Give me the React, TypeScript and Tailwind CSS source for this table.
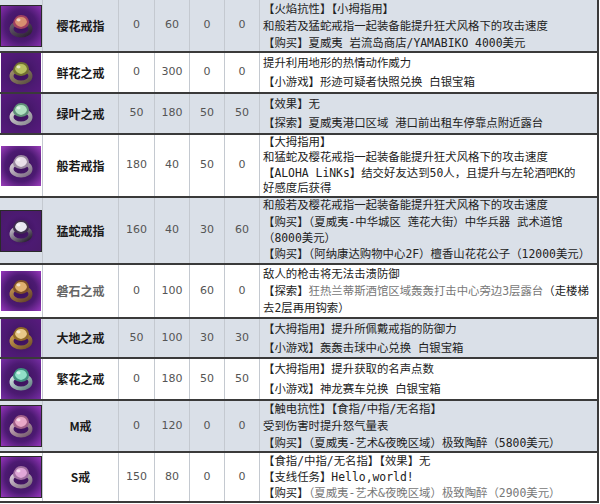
import React from "react";

type Seg = { t: string; g?: boolean };
type Row = {
  name: string;
  nameGray?: boolean;
  v: number[];
  gray: boolean;
  h: string;
  lh: string;
  lines: Seg[][];
  ring: { band: string; band2: string; gem: string; gem2: string; glow: string };
  border?: boolean;
};

const L = (s: string): Seg[] => [{ t: s }];

const rows: Row[] = [
  {
    name: "樱花戒指",
    v: [0, 60, 0, 0],
    gray: true,
    h: "h-[53px]",
    lh: "leading-[16px]",
    border: true,
    lines: [
      L("【火焰抗性】【小拇指用】"),
      L("和般若及猛蛇戒指一起装备能提升狂犬风格下的攻击速度"),
      L("【购买】夏威夷 岩流岛商店/YAMABIKO 4000美元"),
    ],
    ring: { band: "#2a2030", band2: "#6a6070", gem: "#d89070", gem2: "#a04060", glow: "#8a30b0" },
  },
  {
    name: "鲜花之戒",
    v: [0, 300, 0, 0],
    gray: false,
    h: "h-[41px]",
    lh: "leading-[16px]",
    lines: [L("提升利用地形的热情动作威力"), L("【小游戏】形迹可疑者快照兑换 白银宝箱")],
    ring: { band: "#5a5040", band2: "#a09070", gem: "#b8c060", gem2: "#707030", glow: "#5a1a80" },
  },
  {
    name: "绿叶之戒",
    v: [50, 180, 50, 50],
    gray: true,
    h: "h-[41px]",
    lh: "leading-[16px]",
    lines: [L("【效果】无"), L("【探索】夏威夷港口区域 港口前出租车停靠点附近露台")],
    ring: { band: "#8a8a90", band2: "#d8d8d8", gem: "#b0e0c0", gem2: "#609078", glow: "#5a1a80" },
  },
  {
    name: "般若戒指",
    v: [180, 40, 50, 0],
    gray: false,
    h: "h-[63px]",
    lh: "leading-[15px]",
    lines: [
      L("【大拇指用】"),
      L("和猛蛇及樱花戒指一起装备能提升狂犬风格下的攻击速度"),
      L("【ALOHA LiNKs】结交好友达到50人，且提升与左轮酒吧K的"),
      L("好感度后获得"),
    ],
    ring: { band: "#7a6a80", band2: "#d8d0d8", gem: "#e8e0e8", gem2: "#9a8aa0", glow: "#a040c0" },
  },
  {
    name: "猛蛇戒指",
    v: [160, 40, 30, 60],
    gray: true,
    h: "h-[67px]",
    lh: "leading-[15.5px]",
    border: true,
    lines: [
      L("和般若及樱花戒指一起装备能提升狂犬风格下的攻击速度"),
      L("【购买】（夏威夷-中华城区 莲花大街）中华兵器 武术道馆"),
      L("（8000美元）"),
      L("【购买】（阿纳康达购物中心2F）檀香山花花公子（12000美元）"),
    ],
    ring: { band: "#201828", band2: "#c8c0d0", gem: "#e8e8f0", gem2: "#403050", glow: "#4a1a6a" },
  },
  {
    name: "磐石之戒",
    nameGray: true,
    v: [0, 100, 60, 0],
    gray: false,
    h: "h-[54px]",
    lh: "leading-[16px]",
    lines: [
      L("敌人的枪击将无法击溃防御"),
      [{ t: "【探索】" }, { t: "狂热兰蒂斯酒馆区域轰轰打击中心旁边3层露台", g: true }, { t: "（走楼梯" }],
      L("去2层再用钩索）"),
    ],
    ring: { band: "#604028", band2: "#c09050", gem: "#e0b070", gem2: "#805028", glow: "#9a38c0" },
  },
  {
    name: "大地之戒",
    v: [50, 100, 30, 30],
    gray: true,
    h: "h-[40px]",
    lh: "leading-[16px]",
    lines: [L("【大拇指用】提升所佩戴戒指的防御力"), L("【小游戏】轰轰击球中心兑换 白银宝箱")],
    ring: { band: "#705028", band2: "#d0a050", gem: "#e8c888", gem2: "#906828", glow: "#5a1a80" },
  },
  {
    name: "繁花之戒",
    v: [0, 180, 50, 50],
    gray: false,
    h: "h-[42px]",
    lh: "leading-[16px]",
    lines: [L("【大拇指用】提升获取的名声点数"), L("【小游戏】神龙赛车兑换 白银宝箱")],
    ring: { band: "#608080", band2: "#d8e8e8", gem: "#90e0c8", gem2: "#409080", glow: "#7a30a8" },
  },
  {
    name: "M戒",
    v: [0, 120, 0, 0],
    gray: true,
    h: "h-[52px]",
    lh: "leading-[16px]",
    border: true,
    lines: [
      L("【触电抗性】【食指/中指/无名指】"),
      L("受到伤害时提升怒气量表"),
      L("【购买】（夏威夷-艺术&夜晚区域）极致陶醉（5800美元）"),
    ],
    ring: { band: "#705868", band2: "#d8b8c8", gem: "#e8a8c8", gem2: "#a06088", glow: "#9a38c0" },
  },
  {
    name: "S戒",
    v: [150, 80, 0, 0],
    gray: false,
    h: "h-[50px]",
    lh: "leading-[16px]",
    border: true,
    lines: [
      L("【食指/中指/无名指】【效果】无"),
      L("【支线任务】Hello,world!"),
      [{ t: "【购买】" }, { t: "（夏威夷-艺术&夜晚区域）极致陶醉（2900美元）", g: true }],
    ],
    ring: { band: "#786878", band2: "#e0d0e0", gem: "#e0a8d8", gem2: "#a070a0", glow: "#9a38c0" },
  },
];

function RingIcon({ r, id, border }: { r: Row["ring"]; id: number; border?: boolean }) {
  const g = `bg${id}`;
  const b = `bd${id}`;
  const f = `fl${id}`;
  return (
    <svg width="40" height="40" viewBox="0 0 40 40" className={border ? "block outline outline-1 outline-[#2a2a2a]" : "block"}>
      <defs>
        <radialGradient id={g} cx="50%" cy="50%" r="72%">
          <stop offset="0%" stopColor="#3a1058" />
          <stop offset="55%" stopColor="#4c1a72" />
          <stop offset="100%" stopColor={r.glow} />
        </radialGradient>
        <linearGradient id={b} x1="0" y1="0" x2="1" y2="1">
          <stop offset="0%" stopColor={r.band2} />
          <stop offset="100%" stopColor={r.band} />
        </linearGradient>
        <filter id={f}>
          <feGaussianBlur stdDeviation="0.6" />
        </filter>
      </defs>
      <rect x="0" y="0" width="40" height="40" fill={`url(#${g})`} />
      <g filter={`url(#${f})`}>
        <ellipse cx="20" cy="23" rx="9.5" ry="6.5" fill="none" stroke={`url(#${b})`} strokeWidth="4" />
        <path d="M12 17 Q14 9 20 9 Q27 9 28 16 Q28 22 20 23 Q12 22 12 17 Z" fill={r.gem2} />
        <path d="M14 16 Q15 11 20 11 Q25 11 26 16 Q25 20 20 21 Q15 20 14 16 Z" fill={r.gem} />
        <ellipse cx="17.5" cy="14" rx="2" ry="1.4" fill="#ffffff" fillOpacity="0.6" />
      </g>
    </svg>
  );
}

export default function App() {
  return (
    <div className="w-[600px] h-[504px] overflow-hidden bg-white">
      <div className="w-[599px] border-r-2 border-[#3a3a3a]">
        {rows.map((row, i) => (
          <div
            key={i}
            className={`grid grid-cols-[43px_76px_36px_35px_35px_35px_1fr] border-b-2 border-[#3a3a3a] ${row.h} ${
              row.gray ? "bg-[#dae0e8]" : "bg-white"
            }`}
          >
            <div className="flex items-center justify-center border-r border-[#c4c9d0] overflow-hidden">
              <RingIcon r={row.ring} id={i} border={row.border} />
            </div>
            <div
              className={`flex items-center justify-center border-r border-[#c4c9d0] font-bold text-[12px] ${
                row.nameGray ? "text-[#666]" : "text-[#1a1a1a]"
              }`}
              style={{ fontFamily: '"Noto Sans CJK SC", "Noto Sans", sans-serif' }}
            >
              {row.name}
            </div>
            {row.v.map((n, j) => (
              <div
                key={j}
                className="flex items-center justify-center border-r border-[#c4c9d0] text-[11px] text-[#555]"
                style={{ fontFamily: '"DejaVu Sans", sans-serif' }}
              >
                {n}
              </div>
            ))}
            <div
              className={`flex flex-col justify-around pl-[3px] overflow-hidden text-[11.4px] text-[#222] whitespace-nowrap ${row.lh}`}
              style={{ fontFamily: '"DejaVu Sans Mono", "Noto Sans CJK SC", monospace' }}
            >
              {row.lines.map((ln, k) => (
                <div key={k}>
                  {ln.map((s, m) => (
                    <span key={m} className={s.g ? "text-[#777]" : ""}>
                      {s.t}
                    </span>
                  ))}
                </div>
              ))}
            </div>
          </div>
        ))}
      </div>
    </div>
  );
}
